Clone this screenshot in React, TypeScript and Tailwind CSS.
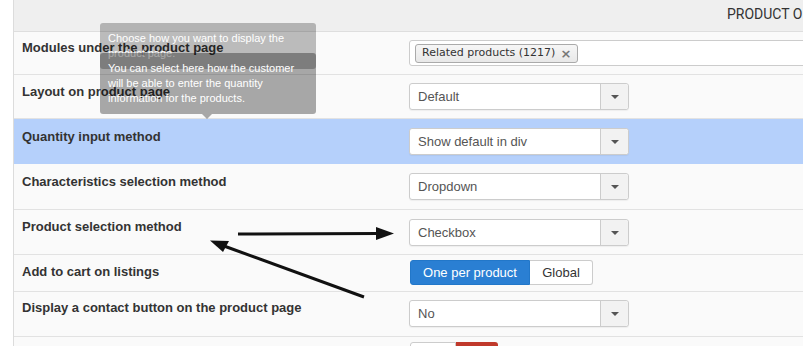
import React from "react";

const font = { fontFamily: '"Liberation Sans", Arial, sans-serif' };

function Caret() {
  return <div className="w-0 h-0 border-l-[4px] border-r-[4px] border-t-[4px] border-l-transparent border-r-transparent border-t-[#555]" />;
}

function Select({ value }: { value: string }) {
  return (
    <div className="flex w-[220px] h-[27px] border border-[#ccc] rounded-[3px] bg-white shadow-[0_1px_1px_rgba(0,0,0,0.05)]">
      <div className="flex-1 pl-[8px] text-[13px] leading-[25px] text-[#555]">{value}</div>
      <div className="w-[28px] border-l border-[#ccc] bg-[#f2f2f2] flex items-center justify-center rounded-r-[3px]">
        <Caret />
      </div>
    </div>
  );
}

function Row({
  label,
  h,
  lt,
  ct,
  bg,
  children,
}: {
  label: string;
  h: string;
  lt: string;
  ct: string;
  bg: string;
  children?: React.ReactNode;
}) {
  return (
    <div className={`flex border-b border-[#e2e2e2] ${h} ${bg}`}>
      <div className={`w-[395px] shrink-0 pl-[8px] ${lt} text-[13px] leading-[18px] font-bold text-[#333]`}>{label}</div>
      <div className={`flex-1 ${ct}`}>{children}</div>
    </div>
  );
}

export default function App() {
  return (
    <div className="relative w-[803px] h-[346px] overflow-hidden bg-white" style={font}>
      <div className="pl-[13px] h-full">
        <div className="border-l border-[#dcdcdc] h-full">
          <div className="h-[32px] bg-[#efefef] border-b border-[#dedede] pl-[713px] pt-[6px] whitespace-nowrap text-[14px] leading-[16px] text-[#333]" style={{ fontFamily: 'Roboto, "Liberation Sans", sans-serif' }}>
            PRODUCT OPTIONS
          </div>
          <Row label="Modules under the product page" h="h-[43px]" lt="pt-[7px]" ct="pt-[8px]" bg="bg-[#fafafa]">
            <div className="flex items-center w-[420px] h-[26px] border border-[#ccc] rounded-[3px] bg-white pl-[5px]">
              <div className="flex items-center h-[19px] px-[6px] border border-[#aaa] rounded-[3px] bg-gradient-to-b from-[#f6f6f6] to-[#e8e8e8] text-[11px] text-[#333] gap-[5px]" style={{ fontFamily: '"DejaVu Sans", Verdana, sans-serif' }}>
                <span>Related products (1217)</span>
                <span className="text-[#777] font-bold text-[13px] leading-none">×</span>
              </div>
            </div>
          </Row>
          <Row label="Layout on product page" h="h-[44px]" lt="pt-[8px]" ct="pt-[8px]" bg="bg-[#fafafa]">
            <Select value="Default" />
          </Row>
          <Row label="Quantity input method" h="h-[45px]" lt="pt-[9px]" ct="pt-[9px]" bg="bg-[#b5d0fb] border-b-[#b5d0fb]">
            <Select value="Show default in div" />
          </Row>
          <Row label="Characteristics selection method" h="h-[46px]" lt="pt-[9px]" ct="pt-[9px]" bg="bg-[#fafafa]">
            <Select value="Dropdown" />
          </Row>
          <Row label="Product selection method" h="h-[45px]" lt="pt-[8px]" ct="pt-[9px]" bg="bg-[#fafafa]">
            <Select value="Checkbox" />
          </Row>
          <Row label="Add to cart on listings" h="h-[37px]" lt="pt-[8px]" ct="pt-[5px]" bg="bg-[#fafafa]">
            <div className="ml-[1px] flex h-[25px] text-[13px] leading-[23px]">
              <div className="w-[120px] bg-[#2a7fd3] border border-[#2277c9] text-white text-center rounded-l-[3px]">One per product</div>
              <div className="w-[63px] bg-white border border-l-0 border-[#ccc] text-[#333] text-center rounded-r-[3px]">Global</div>
            </div>
          </Row>
          <Row label="Display a contact button on the product page" h="h-[45px]" lt="pt-[7px]" ct="pt-[8px]" bg="bg-[#fafafa]">
            <Select value="No" />
          </Row>
          <Row label="" h="h-[60px]" lt="pt-[8px]" ct="pt-[5px]" bg="bg-[#fafafa]">
            <div className="ml-[1px] flex h-[25px]">
              <div className="w-[46px] bg-white border border-[#ccc] rounded-l-[3px]" />
              <div className="w-[42px] bg-[#c0392b] rounded-r-[3px]" />
            </div>
          </Row>
        </div>
      </div>

      {/* tooltips */}
      <div className="absolute left-[100px] top-[23px] w-[216px] h-[46px] rounded-[3px] bg-[rgba(0,0,0,0.25)] px-[8px] pt-[8px] text-[11px] leading-[15px] text-white whitespace-nowrap">
        Choose how you want to display the
        <br />
        product page.
      </div>
      <div className="absolute left-[100px] top-[53px] w-[216px] h-[61px] rounded-[3px] bg-[rgba(0,0,0,0.33)] px-[8px] pt-[8px] text-[11px] leading-[15px] text-white whitespace-nowrap">
        You can select here how the customer
        <br />
        will be able to enter the quantity
        <br />
        information for the products.
        <div className="absolute left-[102px] top-[61px] w-0 h-0 border-l-[5px] border-r-[5px] border-t-[5px] border-l-transparent border-r-transparent border-t-[rgba(0,0,0,0.33)]" />
      </div>

      {/* annotation arrows */}
      <svg className="absolute left-0 top-0 pointer-events-none" width="803" height="346" viewBox="0 0 803 346">
        <line x1="238" y1="234" x2="380" y2="233.5" stroke="#111" strokeWidth="3" />
        <polygon points="376,227 394,233.5 376,240" fill="#111" />
        <line x1="364" y1="297" x2="224" y2="246" stroke="#111" strokeWidth="3" />
        <polygon points="210,240.5 229,241 223,252" fill="#111" />
      </svg>
    </div>
  );
}
